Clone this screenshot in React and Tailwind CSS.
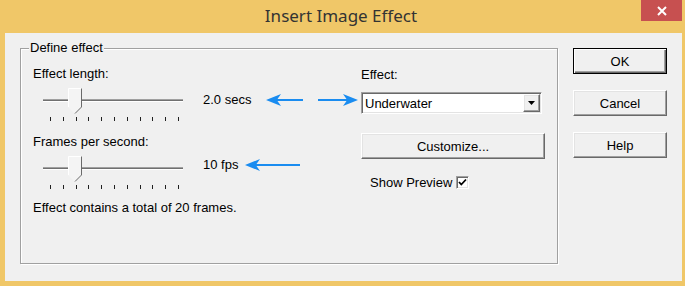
import React from "react";

const FONT = "font-['Liberation_Sans',Arial,sans-serif]";
const raised =
  "border border-t-white border-l-white border-r-[#696969] border-b-[#696969] shadow-[inset_-1px_-1px_0_#a0a0a0,inset_1px_1px_0_#e3e3e3]";
const sunken =
  "border border-t-[#a0a0a0] border-l-[#a0a0a0] border-r-white border-b-white shadow-[inset_1px_1px_0_#696969,inset_-1px_-1px_0_#e3e3e3]";

function Slider({ h = 53 }) {
  const ticks = Array.from({ length: 11 }, (_, i) => Math.round(17 + i * 12.8) + 0.5);
  return (
    <svg width="170" height={h} viewBox={`0 0 170 ${h}`} className="block shrink-0">
      <rect x="10" y="18" width="140" height="1" fill="#a0a0a0" />
      <rect x="10" y="19" width="140" height="1" fill="#707070" />
      <rect x="10" y="20" width="140" height="1" fill="#ffffff" />
      <path d="M35 7 H49 V26 L42 33 L35 26 Z" fill="#f4f4f4" />
      <polyline points="35.5,26 35.5,7.5 48.5,7.5" fill="none" stroke="#ffffff" strokeWidth="1" />
      <polyline points="48.5,7.5 48.5,26 42,32.5" fill="none" stroke="#6a6a6a" strokeWidth="1" />
      {ticks.map((x, i) => (
        <line key={i} x1={x} y1="36" x2={x} y2="40" stroke="#202020" strokeWidth="1" />
      ))}
    </svg>
  );
}

function ArrowLeft({ w, className = "" }) {
  return (
    <svg width={w} height="14" viewBox={`0 0 ${w} 14`} className={"block shrink-0 " + className}>
      <path d={`M0 7 L15 1 L11.5 6 L${w} 6 L${w} 8 L11.5 8 L15 13 Z`} fill="#1a8cf0" />
    </svg>
  );
}

function ArrowRight({ w, className = "" }) {
  return (
    <svg width={w} height="14" viewBox={`0 0 ${w} 14`} className={"block shrink-0 " + className}>
      <path
        d={`M${w} 7 L${w - 15} 1 L${w - 11.5} 6 L0 6 L0 8 L${w - 11.5} 8 L${w - 15} 13 Z`}
        fill="#1a8cf0"
      />
    </svg>
  );
}

export default function App() {
  return (
    <div className={`w-[685px] h-[286px] bg-[#f0c768] flex flex-col ${FONT} text-black`}>
      {/* Title bar */}
      <div className="flex h-[33px] shrink-0">
        <div className="flex-1" />
        <div className="self-center font-['Noto_Sans',sans-serif] text-[17px] leading-[20px] text-[#333333] pb-[1px]">
          Insert Image Effect
        </div>
        <div className="flex-1 flex justify-end pr-[3px]">
          <div className="w-[41px] h-[21px] bg-[#c75050] flex items-center justify-center">
            <svg width="10" height="10" viewBox="0 0 10 10">
              <path d="M1 1 L9 9 M9 1 L1 9" stroke="#ffffff" strokeWidth="2" />
            </svg>
          </div>
        </div>
      </div>

      {/* Client area */}
      <div className="flex ml-[5px] mr-[3px] h-[248px] bg-[#f0f0f0] pl-[15px] pt-[15px] text-[13px] leading-[15px]">
        {/* Group box */}
        <div className="relative w-[538px] h-[216px] border border-[#a0a0a0] shadow-[inset_1px_1px_0_#fff,1px_1px_0_#fff] flex pt-[17px] pl-[12px]">
          <span className="absolute left-[8px] -top-[9px] px-[1px] bg-[#f0f0f0]">Define effect</span>

          {/* Left column */}
          <div className="w-[328px] flex flex-col">
            <div>Effect length:</div>
            <div className="flex items-start h-[53px]">
              <Slider h={53} />
              <div className="w-[63px] mt-[11px]">2.0 secs</div>
              <ArrowLeft w={37} className="mt-[12px]" />
              <ArrowRight w={40} className="mt-[12px] ml-[15px]" />
            </div>
            <div>Frames per second:</div>
            <div className="flex items-start h-[51px]">
              <Slider h={51} />
              <div className="w-[42px] mt-[8px]">10 fps</div>
              <ArrowLeft w={55} className="mt-[9px]" />
            </div>
            <div>Effect contains a total of 20 frames.</div>
          </div>

          {/* Right column */}
          <div className="w-[184px] flex flex-col">
            <div className="pt-[1px]">Effect:</div>
            <div className={`mt-[10px] h-[22px] w-[181px] bg-white flex items-stretch ${sunken}`}>
              <div className="flex-1 flex items-center pl-[3px]">Underwater</div>
              <div className={`w-[17px] my-[1px] mr-[1px] bg-[#f0f0f0] flex items-center justify-center ${raised}`}>
                <svg width="7" height="4" viewBox="0 0 7 4">
                  <path d="M0 0 H7 L3.5 4 Z" fill="#000" />
                </svg>
              </div>
            </div>
            <div className={`mt-[19px] h-[26px] w-[184px] bg-[#f0f0f0] flex items-center justify-center ${raised}`}>
              Customize...
            </div>
            <div className="mt-[16px] flex items-center pl-[9px] gap-[4px]">
              <span>Show Preview</span>
              <div className={`w-[13px] h-[13px] bg-white flex items-center justify-center ${sunken}`}>
                <svg width="9" height="9" viewBox="0 0 9 9">
                  <polyline points="1,4 3.3,6.5 8,1.5" fill="none" stroke="#000" strokeWidth="1.8" />
                </svg>
              </div>
            </div>
          </div>
        </div>

        {/* Buttons */}
        <div className="ml-[15px] w-[94px] flex flex-col gap-[16px]">
          <div className="h-[26px] bg-[#f0f0f0] flex items-center justify-center border border-black shadow-[inset_1px_1px_0_#fff,inset_-1px_-1px_0_#696969,inset_-2px_-2px_0_#a0a0a0]">
            OK
          </div>
          <div className={`h-[26px] bg-[#f0f0f0] flex items-center justify-center ${raised}`}>Cancel</div>
          <div className={`h-[26px] bg-[#f0f0f0] flex items-center justify-center ${raised}`}>Help</div>
        </div>
      </div>
    </div>
  );
}
